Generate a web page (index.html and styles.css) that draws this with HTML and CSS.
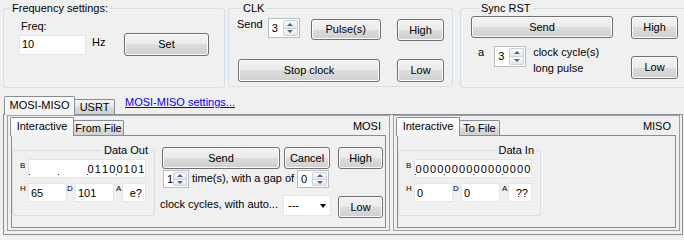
FILE: index.html
```html
<!DOCTYPE html>
<html lang="en">
<head>
  <meta charset="UTF-8">
  <title>SPI tester</title>
  <link rel="stylesheet" href="styles.css">
</head>
<body>
  <div class="top">
    <div class="group g-freq">
      <span class="group-title">Frequency settings:</span>
      <div class="freq-lbl">Freq:</div>
      <div class="row">
        <div class="tb freq-tb">10</div>
        <span class="hz">Hz</span>
        <button class="btn set-btn">Set</button>
      </div>
    </div>
    <div class="group g-clk">
      <span class="group-title">CLK</span>
      <div class="row clk-row1">
        <span>Send</span>
        <div class="num clk-num"><span class="num-val">3</span><span class="spin"><i class="up"></i><i class="down"></i></span></div>
        <button class="btn pulse-btn">Pulse(s)</button>
        <button class="btn side-btn">High</button>
      </div>
      <div class="row clk-row2">
        <button class="btn stop-btn">Stop clock</button>
        <button class="btn side-btn">Low</button>
      </div>
    </div>
    <div class="group g-sync">
      <span class="group-title">Sync RST</span>
      <div class="row sync-row1">
        <button class="btn sync-send">Send</button>
        <button class="btn side-btn">High</button>
      </div>
      <div class="row sync-row2">
        <span class="a-lbl">a</span>
        <div class="num sync-num"><span class="num-val">3</span><span class="spin"><i class="up"></i><i class="down"></i></span></div>
        <div class="pulse-text">clock cycle(s)<br>long pulse</div>
        <button class="btn side-btn low-btn">Low</button>
      </div>
    </div>
  </div>

  <div class="tabctl">
    <div class="tab-strip">
      <div class="tab active main-tab">MOSI-MISO</div>
      <div class="tab usrt-tab">USRT</div>
      <a class="settings-link" href="#">MOSI-MISO settings...</a>
    </div>
    <div class="tabpage">
      <!-- MOSI side -->
      <div class="panel mosi">
        <div class="tab-strip inner-strip">
          <div class="tab active inter-tab">Interactive</div>
          <div class="tab file-tab">From File</div>
          <span class="panel-name">MOSI</span>
        </div>
        <div class="inner-page">
          <div class="group data-group">
            <span class="group-title right">Data Out</span>
            <div class="row bin-row">
              <span class="mini">B</span>
              <div class="tb bin">
                <span class="bit g"></span><span class="bit"></span><span class="bit"></span><span class="bit"></span>
                <span class="bit g"></span><span class="bit"></span><span class="bit"></span><span class="bit"></span>
                <span class="bit g">0</span><span class="bit">1</span><span class="bit">1</span><span class="bit">0</span>
                <span class="bit g">0</span><span class="bit">1</span><span class="bit">0</span><span class="bit">1</span>
              </div>
            </div>
            <div class="row val-row">
              <span class="mini">H</span><div class="tb val">65</div>
              <span class="mini">D</span><div class="tb val">101</div>
              <span class="mini a-mini">A</span><div class="tb val-a">e?</div>
            </div>
          </div>
          <div class="send-ctl">
            <div class="row">
              <button class="btn send-btn">Send</button>
              <button class="btn cancel-btn">Cancel</button>
              <button class="btn hl-btn">High</button>
            </div>
            <div class="row send-row2">
              <div class="num times-num"><span class="num-val">1</span><span class="spin"><i class="up"></i><i class="down"></i></span></div>
              <span class="gap-text">time(s), with a gap of</span>
              <div class="num gap-num"><span class="num-val">0</span><span class="spin"><i class="up"></i><i class="down"></i></span></div>
            </div>
            <div class="row send-row3">
              <span class="auto-text">clock cycles, with auto...</span>
              <div class="combo"><span>---</span></div>
              <button class="btn hl-btn low-hl">Low</button>
            </div>
          </div>
        </div>
      </div>
      <!-- MISO side -->
      <div class="panel miso">
        <div class="tab-strip inner-strip">
          <div class="tab active inter-tab">Interactive</div>
          <div class="tab tofile-tab">To File</div>
          <span class="panel-name">MISO</span>
        </div>
        <div class="inner-page">
          <div class="group data-group">
            <span class="group-title right">Data In</span>
            <div class="row bin-row">
              <span class="mini">B</span>
              <div class="tb bin">
                <span class="bit g">0</span><span class="bit">0</span><span class="bit">0</span><span class="bit">0</span>
                <span class="bit g">0</span><span class="bit">0</span><span class="bit">0</span><span class="bit">0</span>
                <span class="bit g">0</span><span class="bit">0</span><span class="bit">0</span><span class="bit">0</span>
                <span class="bit g">0</span><span class="bit">0</span><span class="bit">0</span><span class="bit">0</span>
              </div>
            </div>
            <div class="row val-row">
              <span class="mini">H</span><div class="tb val">0</div>
              <span class="mini">D</span><div class="tb val">0</div>
              <span class="mini a-mini">A</span><div class="tb val-a">??</div>
            </div>
          </div>
        </div>
      </div>
    </div>
  </div>
</body>
</html>
```

FILE: styles.css
```css
* {
  box-sizing: border-box;
}
body {
  margin: 0;
  width: 684px;
  height: 240px;
  overflow: hidden;
  background: #f0f0f0;
  font: 11px/13px "Liberation Sans", Arial, sans-serif;
  color: #000;
}
.row {
  display: flex;
  align-items: flex-start;
}

/* group boxes */
.top {
  display: flex;
  align-items: flex-start;
  height: 96px;
  padding-top: 8px;
}
.group {
  flex: none;
  border: 1px solid #d5dfe5;
  border-radius: 3px;
}
.group-title {
  display: block;
  width: max-content;
  height: 13px;
  margin: -7px 0 0 6px;
  padding: 0 2px;
  background: #f0f0f0;
}
.group-title.right {
  margin: -7px 4px 0 auto;
}

/* buttons, text boxes */
.btn {
  flex: none;
  font: inherit;
  color: #000;
  padding: 0;
  border: 1px solid #707070;
  border-radius: 3px;
  background: linear-gradient(#f2f2f2, #ebebeb 50%, #dddddd 50%, #cfcfcf);
  box-shadow: inset 0 0 0 1px #fcfcfc;
}
.tb {
  flex: none;
  background: #fff;
  border: 1px solid #e2e5ea;
  white-space: nowrap;
  overflow: hidden;
}
.num {
  flex: none;
  display: flex;
  background: #fff;
  border: 1px solid #b9bcc2;
}
.num-val {
  flex: 1;
  padding-left: 3px;
  align-self: center;
}
.spin {
  display: flex;
  flex-direction: column;
  width: 15px;
  margin: 1px 1px 1px 0;
}
.spin i {
  flex: 1;
  display: flex;
  align-items: center;
  justify-content: center;
  border: 1px solid #ccd1d9;
  background: linear-gradient(#fbfbfb, #e4e7ec);
}
.spin .up {
  border-radius: 2px 2px 0 0;
}
.spin .down {
  border-radius: 0 0 2px 2px;
  border-top: none;
}
.spin i::before {
  content: "";
  border-left: 3px solid transparent;
  border-right: 3px solid transparent;
}
.spin .up::before {
  border-bottom: 3px solid #56657f;
}
.spin .down::before {
  border-top: 3px solid #56657f;
}

/* frequency */
.g-freq {
  margin-left: 3px;
  width: 222px;
  height: 80px;
  padding-right: 15px;
}
.freq-lbl {
  margin: 5px 0 0 17px;
}
.g-freq .row {
  padding-left: 15px;
}
.freq-tb {
  width: 67px;
  height: 20px;
  margin-top: 2px;
  padding: 2px 0 0 2px;
}
.hz {
  margin: 3px 0 0 6px;
}
.set-btn {
  margin-left: auto;
  width: 85px;
  height: 23px;
}

/* clk */
.g-clk {
  margin-left: 3px;
  width: 225px;
  height: 79px;
  padding: 0 8px;
}
.g-clk .group-title {
  margin-left: 4px;
}
.clk-row1 {
  margin-top: 3px;
}
.clk-num {
  margin-left: 5px;
  width: 32px;
  height: 20px;
}
.pulse-btn {
  margin: 1px 0 0 11px;
  width: 70px;
  height: 21px;
}
.side-btn {
  margin-left: auto;
  width: 47px;
  height: 22px;
}
.clk-row1 .side-btn {
  margin-top: 1px;
}
.clk-row2 {
  margin-top: 18px;
}
.stop-btn {
  margin-left: 1px;
  width: 142px;
  height: 23px;
}
.clk-row2 .side-btn {
  height: 23px;
}

/* sync rst */
.g-sync {
  margin-left: 7px;
  width: 230px;
  height: 80px;
  padding: 0 11px 0 10px;
}
.g-sync .group-title {
  margin-left: 8px;
}
.sync-row1 {
  margin-top: 1px;
}
.sync-send {
  width: 142px;
  height: 22px;
}
.sync-row1 .side-btn {
  height: 23px;
}
.sync-row2 {
  margin-top: 7px;
}
.a-lbl {
  margin-left: 7px;
}
.sync-num {
  margin-left: 10px;
  width: 32px;
  height: 21px;
}
.pulse-text {
  margin: -2px 0 0 7px;
  line-height: 16px;
}
.low-btn {
  margin-top: 10px;
  height: 23px;
}

/* tab control */
.tabctl {
  margin: 0 1px 0 3px;
}
.tab-strip {
  display: flex;
  align-items: flex-end;
  height: 18px;
}
.tab {
  flex: none;
  height: 15px;
  margin-left: -1px;
  border: 1px solid #898c95;
  border-bottom: none;
  border-radius: 2px 2px 0 0;
  background: linear-gradient(#f4f4f4, #e9e9e9 45%, #dadada 55%, #d1d1d1);
  text-align: center;
  padding-top: 1px;
}
.tab.active {
  position: relative;
  z-index: 1;
  height: 19px;
  margin-bottom: -1px;
  padding-top: 2px;
  background: linear-gradient(#fdfdfd, #f3f3f3);
}
.main-tab {
  margin-left: 1px !important;
  width: 71px;
}
.usrt-tab {
  width: 41px;
}
.settings-link {
  align-self: flex-start;
  margin-left: 10px;
  color: #0000ff;
  text-decoration: underline;
}
.tabpage {
  display: flex;
  gap: 3px;
  height: 121px;
  border: 1px solid #898c95;
  padding: 0 2px 0 3px;
}

/* mosi / miso panels */
.panel {
  flex: none;
  display: flex;
  flex-direction: column;
  height: 116px;
  border: 1px solid #a0a0a0;
  padding: 1px 3px 2px 3px;
}
.mosi {
  width: 383px;
}
.miso {
  width: 287px;
}
.inter-tab {
  width: 64px;
}
.file-tab {
  width: 51px;
}
.tofile-tab {
  width: 41px;
}
.panel-name {
  align-self: flex-start;
  margin: 3px 5px 0 auto;
}
.inner-page {
  flex: 1;
  display: flex;
  align-items: flex-start;
  border: 1px solid #898c95;
}
.data-group {
  width: 143px;
  height: 66px;
  margin-top: 14px;
}
.data-group .row {
  padding-left: 7px;
}
.bin-row {
  margin-top: 2px;
}
.mini {
  flex: none;
  width: 8px;
  font-size: 8px;
  line-height: 9px;
  margin-top: 2px;
}
.val-row .mini {
  margin-top: 1px;
}
.mini.a-mini {
  width: 6px;
  margin-left: 2px;
}
.bin {
  display: flex;
  width: 118px;
  height: 19px;
  padding-top: 3px;
}
.bit {
  flex: none;
  width: 7.25px;
  height: 13px;
  text-align: center;
}
.bit.g {
  background: linear-gradient(#333, #333) no-repeat 0 11px / 1px 1px;
}
.val-row {
  margin-top: 5px;
}
.val {
  width: 39px;
  height: 19px;
  padding: 3px 0 0 2px;
}
.val-a {
  width: 24px;
  height: 19px;
  padding: 3px 3px 0 0;
  text-align: right;
}

/* send controls */
.send-ctl {
  margin: 11px 0 0 5px;
}
.send-btn {
  margin-left: 2px;
  width: 118px;
  height: 22px;
}
.cancel-btn {
  margin-left: 4px;
  width: 46px;
  height: 22px;
}
.hl-btn {
  margin-left: 8px;
  width: 45px;
  height: 22px;
}
.send-row2 {
  margin-top: 1px;
}
.times-num {
  margin-left: 3px;
  width: 26px;
  height: 18px;
}
.gap-text {
  flex: none;
  width: 105px;
  margin: 2px 0 0 3px;
  white-space: nowrap;
}
.gap-num {
  width: 32px;
  height: 18px;
}
.send-row3 {
  margin-top: 7px;
}
.auto-text {
  flex: none;
  width: 123px;
  margin-top: 3px;
  white-space: nowrap;
}
.combo {
  flex: none;
  display: flex;
  align-items: center;
  justify-content: space-between;
  width: 48px;
  height: 21px;
  padding: 0 4px 0 4px;
  background: #fff;
  border: 1px solid #e2e5ea;
}
.combo::after {
  content: "";
  border-left: 3.5px solid transparent;
  border-right: 3.5px solid transparent;
  border-top: 4px solid #000;
}
.low-hl {
  margin: 1px 0 0 7px;
}
```
